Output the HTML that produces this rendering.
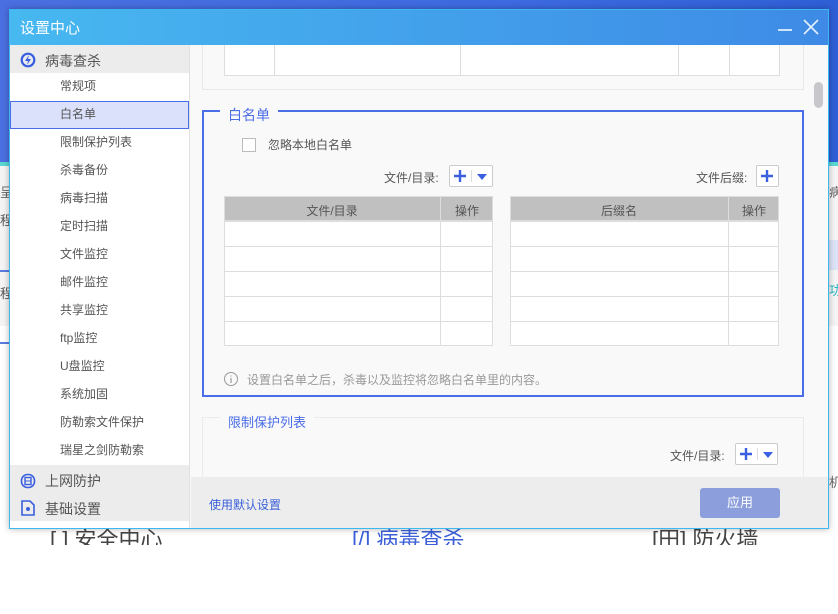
<!DOCTYPE html>
<html><head><meta charset="utf-8"><style>
*{margin:0;padding:0;box-sizing:border-box}
body{width:838px;height:614px;overflow:hidden;position:relative;background:#fff;font-family:"Liberation Sans","Noto Sans CJK SC",sans-serif;font-size:12px;color:#555}
.a{position:absolute}
.t{position:absolute;white-space:nowrap}
.pl{position:absolute}
</style></head><body>
<div class="a" style="left:0;top:0;width:838px;height:165px;background:linear-gradient(90deg,#4a6fe0,#3d6ae0 60%,#2f5fd6)"></div>
<div class="a" style="left:0;top:162px;width:838px;height:4px;background:#5ad8d0"></div>
<div class="a" style="left:0;top:166px;width:838px;height:160px;background:#f4f4f4"></div>
<div class="t" style="left:0;top:182px;font-size:13px;color:#666">呈</div>
<div class="t" style="left:0;top:210px;font-size:13px;color:#555">程</div>
<div class="t" style="left:0;top:283px;font-size:13px;color:#555">程</div>
<div class="a" style="left:0;top:270px;width:9px;height:2px;background:#5b7be0"></div>
<div class="a" style="left:0;top:342px;width:9px;height:2px;background:#5b7be0"></div>
<div class="t" style="left:829px;top:182px;font-size:13px;color:#666">病</div>
<div class="a" style="left:829px;top:240px;width:9px;height:30px;background:#dde3f6"></div>
<div class="t" style="left:829px;top:280px;font-size:13px;color:#2bb5c8">功</div>
<div class="t" style="left:829px;top:472px;font-size:13px;color:#666">机</div>
<div class="t" style="left:50px;top:522px;font-size:22px;color:#444">[ ] 安全中心</div>
<div class="t" style="left:352px;top:522px;font-size:22px;color:#3a5fd9">[/] 病毒查杀</div>
<div class="t" style="left:652px;top:522px;font-size:22px;color:#444">[田] 防火墙</div>
<div class="a" style="left:0;top:545px;width:838px;height:69px;background:#fff"></div>
<div class="a" style="left:9px;top:9px;width:820px;height:520px;border:1px solid #3cb8f0;background:#f9f9f9;box-shadow:0 0 6px rgba(0,0,0,.3)">
 <div class="a" style="left:0;top:0;width:818px;height:35px;background:linear-gradient(90deg,#47b8f0,#3e8ae6)"></div>
 <div class="t" style="left:10px;top:7px;font-size:15px;color:#fff">设置中心</div>
 <div class="a" style="left:768px;top:19px;width:14px;height:2px;background:#cfe3fb"></div>
 <svg class="a" style="left:793px;top:9px" width="16" height="16"><path d="M1 1L15 15M15 1L1 15" stroke="#e4efff" stroke-width="1.6"/></svg>
 <div class="a" style="left:0;top:35px;width:180px;height:483px;background:#fff;border-right:1px solid #e0e0e0"></div>
 <div class="a" style="left:0;top:35px;width:179px;height:28px;background:#ececec"></div>
 <svg class="a" style="left:10px;top:42px" width="16" height="16"><circle cx="8" cy="8" r="6.3" fill="none" stroke="#3a5fe0" stroke-width="2.2"/><path d="M9 3L5 9H8L7 13L11 7H8Z" fill="#3a5fe0"/></svg>
 <div class="t" style="left:35px;top:41px;font-size:14px;color:#555">病毒查杀</div>
 <div class="a" style="left:0;top:91px;width:179px;height:28px;background:#dbe1fb;border:1px solid #4a6de8"></div>
 <div class="t" style="left:50px;top:62px;color:#555;line-height:28px">常规项<br>白名单<br>限制保护列表<br>杀毒备份<br>病毒扫描<br>定时扫描<br>文件监控<br>邮件监控<br>共享监控<br>ftp监控<br>U盘监控<br>系统加固<br>防勒索文件保护<br>瑞星之剑防勒索</div>
 <div class="a" style="left:0;top:455px;width:179px;height:56px;background:#ececec"></div>
 <svg class="a" style="left:10px;top:463px" width="16" height="16"><rect x="1.5" y="1.5" width="13" height="13" rx="6" fill="none" stroke="#3a5fe0" stroke-width="1.6"/><rect x="5" y="4.5" width="6" height="7" fill="none" stroke="#3a5fe0" stroke-width="1.4"/><path d="M5 8H11" stroke="#3a5fe0"/></svg>
 <div class="t" style="left:35px;top:461px;font-size:14px;color:#555">上网防护</div>
 <svg class="a" style="left:11px;top:490px" width="14" height="16"><path d="M1 1H9L13 5V15H1Z" fill="none" stroke="#3a5fe0" stroke-width="1.6"/><circle cx="7" cy="9" r="2" fill="#3a5fe0"/></svg>
 <div class="t" style="left:35px;top:489px;font-size:14px;color:#555">基础设置</div>
 <div class="a" style="left:192px;top:35px;width:602px;height:45px;border:1px solid #e8e8e8;border-top:none"></div>
 <div class="a" style="left:214px;top:35px;width:556px;height:31px;background:#fff;border:1px solid #ddd;border-top:none"></div>
 <div class="a" style="left:264px;top:35px;width:1px;height:30px;background:#ddd"></div>
 <div class="a" style="left:450px;top:35px;width:1px;height:30px;background:#ddd"></div>
 <div class="a" style="left:668px;top:35px;width:1px;height:30px;background:#ddd"></div>
 <div class="a" style="left:719px;top:35px;width:1px;height:30px;background:#ddd"></div>
 <div class="a" style="left:804px;top:72px;width:9px;height:26px;border-radius:5px;background:#c8c8cc"></div>
 <div class="a" style="left:192px;top:100px;width:602px;height:287px;border:2px solid #4a6de8"></div>
 <div class="t" style="left:210px;top:95px;padding:0 8px;background:#f9f9f9;font-size:14px;color:#4a6de8">白名单</div>
 <div class="a" style="left:232px;top:128px;width:14px;height:14px;border:1px solid #bbb;background:#fff"></div>
 <div class="t" style="left:258px;top:126px;color:#555">忽略本地白名单</div>
 <div class="t" style="left:374px;top:159px;color:#555">文件/目录:</div>
 <div class="a" style="left:439px;top:155px;width:44px;height:22px;border:1px solid #ccc;background:#fff;border-radius:2px"></div>
 <svg class="pl" style="left:444px;top:160px" width="12" height="12"><path d="M6 0V12M0 6H12" stroke="#3a5fe0" stroke-width="2.4"/></svg>
 <div class="a" style="left:461px;top:160px;width:1px;height:12px;background:#ddd"></div>
 <div class="a" style="left:467px;top:164px;border-left:5px solid transparent;border-right:5px solid transparent;border-top:6px solid #3a5fe0"></div>
 <div class="t" style="left:686px;top:159px;color:#555">文件后缀:</div>
 <div class="a" style="left:746px;top:155px;width:23px;height:22px;border:1px solid #ccc;background:#fff;border-radius:2px"></div>
 <svg class="pl" style="left:751px;top:160px" width="12" height="12"><path d="M6 0V12M0 6H12" stroke="#3a5fe0" stroke-width="2.4"/></svg>
 <div class="a" style="left:214px;top:186px;width:269px;height:150px;background:#fff;border:1px solid #ddd;background-image:repeating-linear-gradient(#fff 0 24px,#ddd 24px 25px)"></div>
 <div class="a" style="left:214px;top:186px;width:269px;height:25px;background:#c0c0c0;border:1px solid #ddd"></div>
 <div class="a" style="left:430px;top:186px;width:1px;height:150px;background:#ddd"></div>
 <div class="t" style="left:214px;top:192px;width:216px;text-align:center;color:#555">文件/目录</div>
 <div class="t" style="left:431px;top:192px;width:52px;text-align:center;color:#555">操作</div>
 <div class="a" style="left:500px;top:186px;width:269px;height:150px;background:#fff;border:1px solid #ddd;background-image:repeating-linear-gradient(#fff 0 24px,#ddd 24px 25px)"></div>
 <div class="a" style="left:500px;top:186px;width:269px;height:25px;background:#c0c0c0;border:1px solid #ddd"></div>
 <div class="a" style="left:718px;top:186px;width:1px;height:150px;background:#ddd"></div>
 <div class="t" style="left:500px;top:192px;width:218px;text-align:center;color:#555">后缀名</div>
 <div class="t" style="left:719px;top:192px;width:50px;text-align:center;color:#555">操作</div>
 <svg class="a" style="left:213px;top:361px" width="16" height="16"><circle cx="8" cy="8" r="6.5" fill="none" stroke="#999"/><path d="M8 7V12M8 4.5V5.5" stroke="#999" stroke-width="1.2"/></svg>
 <div class="t" style="left:237px;top:361px;color:#999">设置白名单之后，杀毒以及监控将忽略白名单里的内容。</div>
 <div class="a" style="left:192px;top:407px;width:602px;height:70px;border:1px solid #ebebeb;border-bottom:none"></div>
 <div class="t" style="left:210px;top:402px;padding:0 8px;background:#f9f9f9;font-size:13px;color:#4a6de8">限制保护列表</div>
 <div class="t" style="left:660px;top:437px;color:#555">文件/目录:</div>
 <div class="a" style="left:725px;top:433px;width:43px;height:22px;border:1px solid #ccc;background:#fff;border-radius:2px"></div>
 <svg class="pl" style="left:730px;top:438px" width="12" height="12"><path d="M6 0V12M0 6H12" stroke="#3a5fe0" stroke-width="2.4"/></svg>
 <div class="a" style="left:747px;top:438px;width:1px;height:12px;background:#ddd"></div>
 <div class="a" style="left:753px;top:442px;border-left:5px solid transparent;border-right:5px solid transparent;border-top:6px solid #3a5fe0"></div>
 <div class="a" style="left:181px;top:467px;width:637px;height:51px;background:#ededed"></div>
 <div class="t" style="left:199px;top:486px;color:#3a5fd9">使用默认设置</div>
 <div class="a" style="left:690px;top:478px;width:80px;height:30px;background:#8c9fdc;border-radius:3px;color:#fff;font-size:13px;text-align:center;line-height:30px">应用</div>
</div>
</body></html>
